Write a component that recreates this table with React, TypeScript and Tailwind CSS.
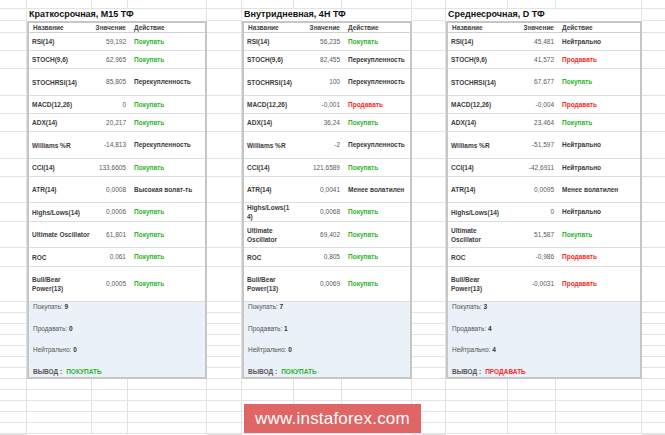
type Act = 'buy' | 'sell' | 'over' | 'neutral' | 'hv' | 'lv';

const ACT: Record<Act, { label: string; cls: string }> = {
  buy: { label: 'Покупать', cls: 'text-[#2cb52c]' },
  sell: { label: 'Продавать', cls: 'text-[#ff2626]' },
  over: { label: 'Перекупленность', cls: 'text-[#3a3a3a]' },
  neutral: { label: 'Нейтрально', cls: 'text-[#3a3a3a]' },
  hv: { label: 'Высокая волат-ть', cls: 'text-[#3a3a3a]' },
  lv: { label: 'Менее волатилен', cls: 'text-[#3a3a3a]' },
};

type Row = { name: string; h: string; cells: [string, Act][] };

const ROWS: Row[] = [
  { name: 'RSI(14)', h: 'h-[18px]', cells: [['59,192', 'buy'], ['56,235', 'buy'], ['45,481', 'neutral']] },
  { name: 'STOCH(9,6)', h: 'h-[18px]', cells: [['62,965', 'buy'], ['82,455', 'over'], ['41,572', 'sell']] },
  { name: 'STOCHRSI(14)', h: 'h-[27px]', cells: [['85,805', 'over'], ['100', 'over'], ['67,677', 'buy']] },
  { name: 'MACD(12,26)', h: 'h-[18px]', cells: [['0', 'buy'], ['-0,001', 'sell'], ['-0,004', 'sell']] },
  { name: 'ADX(14)', h: 'h-[18px]', cells: [['20,217', 'buy'], ['36,24', 'buy'], ['23,464', 'buy']] },
  { name: 'Williams %R', h: 'h-[27px]', cells: [['-14,813', 'over'], ['-2', 'over'], ['-51,597', 'neutral']] },
  { name: 'CCI(14)', h: 'h-[18px]', cells: [['133,6605', 'buy'], ['121,6589', 'buy'], ['-42,6911', 'neutral']] },
  { name: 'ATR(14)', h: 'h-[26px]', cells: [['0,0008', 'hv'], ['0,0041', 'lv'], ['0,0095', 'lv']] },
  { name: 'Highs/Lows(14)', h: 'h-[19px]', cells: [['0,0006', 'buy'], ['0,0068', 'buy'], ['0', 'neutral']] },
  { name: 'Ultimate Oscillator', h: 'h-[26px]', cells: [['61,801', 'buy'], ['69,402', 'buy'], ['51,587', 'buy']] },
  { name: 'ROC', h: 'h-[19px]', cells: [['0,061', 'buy'], ['0,805', 'buy'], ['-0,986', 'sell']] },
  { name: 'Bull/Bear Power(13)', h: 'h-[35px]', cells: [['0,0005', 'buy'], ['0,0069', 'buy'], ['-0,0031', 'sell']] },
];

const TABLES = [
  {
    title: 'Краткосрочная, M15 ТФ',
    w: 'w-[180px]',
    outer: ['w-[65px]', 'w-[36px]', 'w-[79px]'],
    inner: ['w-[63px]', 'w-[36px]', 'w-[77px]'],
    namePad: 'pr-0',
    counts: [9, 0, 0],
    verdict: 'buy' as const,
  },
  {
    title: 'Внутридневная, 4Н ТФ',
    w: 'w-[170px]',
    outer: ['w-[52px]', 'w-[48px]', 'w-[70px]'],
    inner: ['w-[50px]', 'w-[48px]', 'w-[68px]'],
    namePad: 'pr-[1.5px]',
    counts: [7, 1, 0],
    verdict: 'buy' as const,
  },
  {
    title: 'Среднесрочная, D ТФ',
    w: 'w-[196px]',
    outer: ['w-[62px]', 'w-[48px]', 'w-[86px]'],
    inner: ['w-[60px]', 'w-[48px]', 'w-[84px]'],
    namePad: 'pr-0',
    counts: [3, 4, 4],
    verdict: 'sell' as const,
  },
];

// spreadsheet row heights, top to bottom
const GRID = [
  'h-[9px]',
  'h-[12px]',
  'h-[12px]',
  ...ROWS.map((r) => r.h),
  ...Array(12).fill('h-[11px]'),
  'h-[1px]',
];

const LINE = 'border-[#e3e3e3]';

function Gap({ w, last }: { w: string; last?: boolean }) {
  return (
    <div className={`${w} shrink-0 flex flex-col`}>
      {GRID.map((h, i) => (
        <div key={i} className={`${h} border-b ${last ? '' : 'border-r'} ${LINE}`} />
      ))}
    </div>
  );
}

function Table({ t, idx }: { t: (typeof TABLES)[number]; idx: number }) {
  const [nameW, valW, actW] = t.inner;
  return (
    <div className={`${t.w} shrink-0 flex flex-col`}>
      <div className="h-[9px] flex">
        {t.outer.map((w, i) => (
          <div key={i} className={`${w} border-b border-r ${LINE}`} />
        ))}
      </div>
      <div className={`h-[12px] flex items-center pl-[2px] border-r ${LINE} text-[9px] font-bold text-[#111] whitespace-nowrap`}>
        {t.title}
      </div>

      <div className="border-2 border-[#c6c6c6] bg-white">
        {/* header */}
        <div className="h-[10px] flex items-center border-b border-[#d0d0d0] text-[6.5px] font-bold text-[#444]">
          <div className={`${nameW} pl-[4px]`}>Название</div>
          <div className={`${valW} pr-[2px] text-right`}>Значение</div>
          <div className={`${actW} pl-[6px]`}>Действие</div>
        </div>

        {ROWS.map((r) => {
          const [val, act] = r.cells[idx];
          return (
            <div key={r.name} className={`${r.h} flex items-center border-b border-[#dedede] text-[6.5px]`}>
              <div className={`${nameW} pl-[3px] ${t.namePad} font-bold text-[#3c3c3c] leading-[9px] break-words`}>{r.name}</div>
              <div className={`${valW} pr-[2px] text-right text-[#5a5a5a]`}>{val}</div>
              <div className={`${actW} pl-[6px] font-bold whitespace-nowrap ${ACT[act].cls}`}>{ACT[act].label}</div>
            </div>
          );
        })}

        {/* summary */}
        <div className="h-[75px] bg-[#eaf1f9] pl-[4px] flex flex-col gap-[11px] text-[6.5px] text-[#555]">
          <div className="h-[11px] flex items-center">
            Покупать:&nbsp;<b className="text-[#333]">{t.counts[0]}</b>
          </div>
          <div className="h-[11px] flex items-center">
            Продавать:&nbsp;<b className="text-[#333]">{t.counts[1]}</b>
          </div>
          <div className="h-[11px] flex items-center">
            Нейтрально:&nbsp;<b className="text-[#333]">{t.counts[2]}</b>
          </div>
          <div className="h-[11px] flex items-center font-bold">
            ВЫВОД :
            <span className={`ml-[4px] ${t.verdict === 'buy' ? 'text-[#2cb52c]' : 'text-[#ff2626]'}`}>
              {t.verdict === 'buy' ? 'ПОКУПАТЬ' : 'ПРОДАВАТЬ'}
            </span>
          </div>
        </div>
      </div>

      {[0, 1, 2, 3, 4].map((i) => (
        <div key={i} className="h-[11px] flex">
          {t.outer.map((w, j) => (
            <div key={j} className={`${w} border-b border-r ${LINE}`} />
          ))}
        </div>
      ))}
    </div>
  );
}

export default function App() {
  return (
    <div className="relative w-[665px] h-[435px] overflow-hidden bg-white font-['Liberation_Sans',Arial,sans-serif]">
      <div className="flex">
        <Gap w="w-[27px]" />
        <Table t={TABLES[0]} idx={0} />
        <Gap w="w-[35px]" />
        <Table t={TABLES[1]} idx={1} />
        <Gap w="w-[34px]" />
        <Table t={TABLES[2]} idx={2} />
        <Gap w="flex-1" last />
      </div>

      {/* watermark */}
      <div className="absolute left-[244px] top-[404px] w-[177px] h-[29px] bg-[#e06565] flex items-center justify-center text-white text-[17px] tracking-[0.2px]">
        www.instaforex.com
      </div>
    </div>
  );
}
